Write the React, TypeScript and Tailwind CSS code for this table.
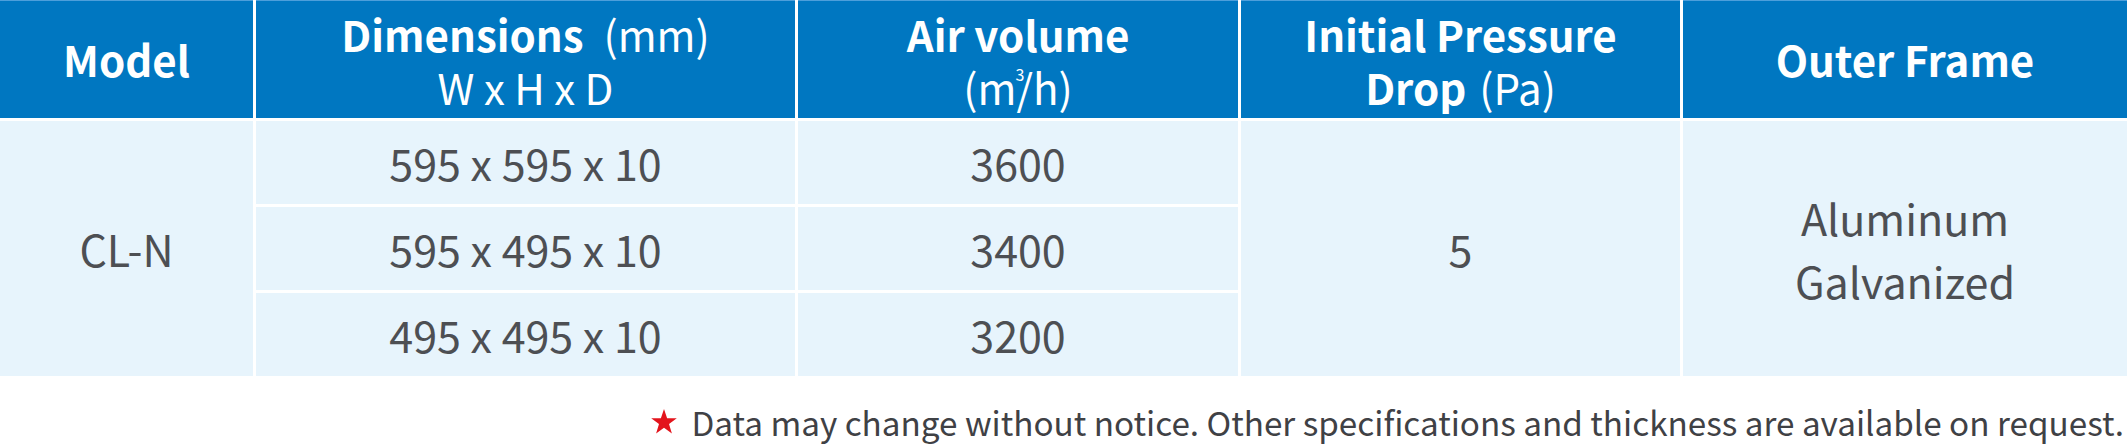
import React from "react";

const HEAD = "bg-[#0077c1] border-t border-[#4d9fdb] flex flex-col items-center justify-center text-white text-[42px] leading-[53px] text-center";
const CELL = "bg-[#e7f4fc] flex items-center justify-center text-[#4d4f53] text-[43px] leading-[63px] text-center";

const sizes = [
	{ dim: "595 x 595 x 10", air: "3600", row: "row-start-2" },
	{ dim: "595 x 495 x 10", air: "3400", row: "row-start-3" },
	{ dim: "495 x 495 x 10", air: "3200", row: "row-start-4" },
];

const App: React.FC = () => {
	return (
		<div className="w-[2127px] h-[444px] bg-white font-['Noto_Sans_CJK_SC','Noto_Sans',sans-serif]">
			<div className="grid grid-cols-[253px_539px_440px_439px_1fr] grid-rows-[118px_83px_83px_83px] gap-[3px]">
				{/* header */}
				<div className={HEAD}>
					<span className="font-bold -mt-[2px]">Model</span>
				</div>
				<div className={HEAD}>
					<p>
						<span className="font-bold">Dimensions</span>
						<span className="ml-[20px] font-normal">(mm)</span>
					</p>
					<p className="font-normal">W x H x D</p>
				</div>
				<div className={HEAD}>
					<p className="font-bold">Air volume</p>
					<p className="font-normal">
						(
						<span className="relative">
							m
							<span className="absolute left-full top-[10px] -ml-[1px] text-[16px] leading-none">3</span>
						</span>
						/h)
					</p>
				</div>
				<div className={HEAD}>
					<p className="font-bold">Initial Pressure</p>
					<p>
						<span className="font-bold">Drop</span>
						<span className="ml-[13px] font-normal">(Pa)</span>
					</p>
				</div>
				<div className={HEAD}>
					<span className="font-bold -mt-[2px]">Outer Frame</span>
				</div>

				{/* body */}
				<div className={`${CELL} col-start-1 row-start-2 row-span-3`}>CL-N</div>
				{sizes.map((s) => (
					<React.Fragment key={s.dim}>
						<div className={`${CELL} col-start-2 ${s.row}`}>{s.dim}</div>
						<div className={`${CELL} col-start-3 ${s.row}`}>{s.air}</div>
					</React.Fragment>
				))}
				<div className={`${CELL} col-start-4 row-start-2 row-span-3`}>5</div>
				<div className={`${CELL} col-start-5 row-start-2 row-span-3 flex-col`}>
					<p>Aluminum</p>
					<p>Galvanized</p>
				</div>
			</div>

			<div className="mt-[29px] pr-[3px] flex items-center justify-end text-[33.25px] leading-[34px] text-[#3f4145]">
				<svg width="26" height="25" viewBox="0 0 26 25" className="mr-[14px] -mt-[2px]">
					<polygon
						points="13,0 16.1,9.2 25.8,9.3 18,15.1 20.9,24.4 13,18.8 5.1,24.4 8,15.1 0.2,9.3 9.9,9.2"
						fill="#e3141c"
					/>
				</svg>
				<span>Data may change without notice. Other specifications and thickness are available on request.</span>
			</div>
		</div>
	);
};

export default App;
